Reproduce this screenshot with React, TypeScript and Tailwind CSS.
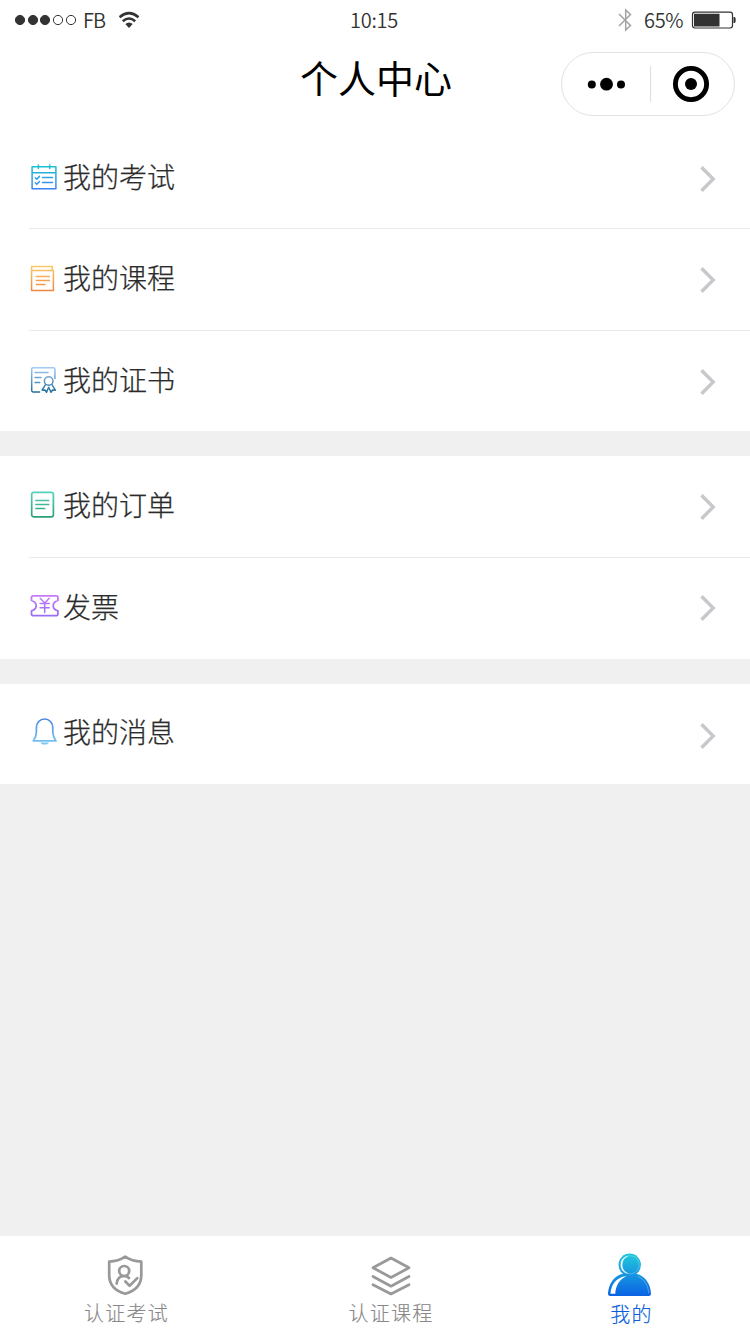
import React from "react";

type IconProps = { id: string };

function Gradient({ id, from, to }: { id: string; from: string; to: string }) {
  return (
    <defs>
      <linearGradient id={id} gradientUnits="userSpaceOnUse" x1="0" y1="4" x2="0" y2="30">
        <stop offset="0" stopColor={from} />
        <stop offset="1" stopColor={to} />
      </linearGradient>
    </defs>
  );
}

function RowIcon({ id, from, to, width = 1.5, children }: IconProps & { from: string; to: string; width?: number; children: React.ReactNode }) {
  return (
    <svg className="h-[34px] w-[34px] shrink-0" viewBox="0 0 34 34" fill="none" stroke={`url(#${id})`} strokeWidth={width} strokeLinecap="round" strokeLinejoin="round">
      <Gradient id={id} from={from} to={to} />
      {children}
    </svg>
  );
}

const examIcon = (
  <RowIcon id="exam" from="#1cc8cf" to="#3f7ff0" width={1.5}>
    <path d="M3.1 6.8h23.8v22H3.1zM3.1 12.7h23.8M9.4 5v3.6M20.7 5v3.6M6.3 17.7l1.5 1.4 2.7-2.7M6.3 22.800l1.500 1.400 2.700-2.700M13.500 17.600h10M13.500 22.600h10" />
  </RowIcon>
);

const courseIcon = (
  <RowIcon id="course" from="#fccb67" to="#f1853f" width={1.5}>
    <path d="M2.6 9.500V5.500h20.700v4M2.600 9.500h21.800v20H2.600zM7.300 15.500h13M7.300 19.500h13M7.300 23.500h8.700" />
  </RowIcon>
);

const certIcon = (
  <RowIcon id="cert" from="#a8ccf7" to="#1c6a99" width={1.5}>
    <path d="M10.6 28.900H4a1.300 1.300 0 0 1-1.300-1.300V6A1.300 1.300 0 0 1 4 4.700h20.600A1.300 1.300 0 0 1 25.900 6v9.500M6 9.500h13M6 14.500h6M6 19.500h4.800" />
    <circle cx="19.7" cy="18" r="4.300" />
    <path d="M16.400 21.600l-3.200 5.600 2.800-.200 1.500 2.300 2.200-5 2.300 5 1.500-2.300 2.800.200-3.300-5.600" />
  </RowIcon>
);

const orderIcon = (
  <RowIcon id="order" from="#55d3bc" to="#299d76" width={1.7}>
    <rect x="2.7" y="4.300" width="21.700" height="24.600" rx="2.200" />
    <path d="M7 12.500h12.600M7 16.500h12.600M7 20.500h8.600" />
  </RowIcon>
);

const invoiceIcon = (
  <RowIcon id="invoice" from="#cc7bff" to="#8f6cf0" width={1.8}>
    <path d="M2.500 7.200A1.300 1.300 0 0 1 3.800 5.900h23.800a1.300 1.300 0 0 1 1.300 1.300v3.300c-2.800.900-4.700 2.800-4.700 5.200s1.900 4.300 4.700 5.200v3.400a1.300 1.300 0 0 1-1.300 1.300H3.800a1.300 1.300 0 0 1-1.300-1.300v-3.400c2.800-.900 4.700-2.800 4.700-5.200s-1.900-4.300-4.700-5.200z" />
    <path strokeWidth="1.500" d="M11.200 8.300l4.500 4.700 4.500-4.700M15.700 13v9.500M11.100 13.500h9.200M11.100 17.800h9.200" />
  </RowIcon>
);

const bellIcon = (
  <RowIcon id="bell" from="#4b86e6" to="#7cc8f2" width={1.700}>
    <path d="M4.200 25.900h22.800c-2-2.700-3.200-5.300-3.200-8.800v-4.300c0-5-3.500-8.800-8.200-8.800S7.400 7.800 7.400 12.800v4.300c0 3.500-1.200 6.100-3.200 8.800z" />
    <path d="M11.300 27.400h8.700c-1 1.500-2.500 2.200-4.300 2.200s-3.400-.700-4.400-2.200z" fill="#7cc8f2" stroke="none" />
  </RowIcon>
);

function Chevron({ className }: { className: string }) {
  return (
    <svg className={`h-[30px] w-5 ${className}`} viewBox="0 0 20 30" fill="none" stroke="#c7c7cc" strokeWidth="3.400">
      <path d="M4.500 3.200L16.200 15 4.500 26.800" />
    </svg>
  );
}

function Row({ icon, label, height, top = "pt-8", shift = "mt-1", divider = false }: { icon: React.ReactNode; label: string; height: string; top?: string; shift?: string; divider?: boolean }) {
  return (
    <div className={`bg-white pl-[29px] ${height}`}>
      <div className={`flex h-full items-start justify-between pr-[33px] ${top} ${divider ? "border-b border-[#ebebeb]" : ""}`}>
        <div className="flex items-start">
          {icon}
          <span className="text-[28px] leading-8 font-light text-[#2b2b2b] [-webkit-text-stroke:0.25px_#2b2b2b]">{label}</span>
        </div>
        <Chevron className={shift} />
      </div>
    </div>
  );
}

function StatusBar() {
  return (
    <div className="grid h-10 grid-cols-3 items-center text-[20px] leading-10 font-[350] text-[#333]">
      <div className="flex items-center pl-[15px]">
        <svg className="h-3 w-[62px]" viewBox="0 0 62 12" fill="#333" stroke="#333">
          <circle cx="5" cy="6" r="4.600" />
          <circle cx="18" cy="6" r="4.600" />
          <circle cx="30" cy="6" r="4.600" />
          <circle cx="43" cy="6" r="4.600" fill="none" />
          <circle cx="56" cy="6" r="4.600" fill="none" />
        </svg>
        <span className="ml-[6px] w-[36px] tracking-[-0.8px]">FB</span>
        <svg className="h-[18px] w-[22px]" viewBox="0 0 22 18" fill="none" stroke="#333" strokeWidth="2.600">
          <path d="M.500 6.200Q10-2 19.500 6.200M3.800 10.200Q10 4.800 16.200 10.200" />
          <path d="M6.300 13Q10 10 13.700 13L10 17z" fill="#333" stroke="none" />
        </svg>
      </div>
      <div className="pr-[2px] text-center tracking-[-0.300px]">10:15</div>
      <div className="flex items-center justify-end pr-[14px]">
        <svg className="h-[26px] w-4" viewBox="0 0 16 26" fill="none" stroke="#a3a3a3" strokeWidth="1.500">
          <path d="M3 7l11.500 11.500L9.700 23V3l4.800 4.500L3 19" />
        </svg>
        <span className="ml-3 w-[47px] tracking-[-0.300px]">65%</span>
        <svg className="h-[18px] w-[45px]" viewBox="0 0 45 18">
          <rect x="1.500" y="1.200" width="40" height="15.800" rx="2.400" fill="none" stroke="#333" strokeWidth="1.200" />
          <path d="M3 2.800h25.500v12.700H3zM42.500 6h1.400q.8.600.8 3t-.8 3h-1.400z" fill="#333" />
        </svg>
      </div>
    </div>
  );
}

function Header() {
  return (
    <div className="grid h-[87px] grid-cols-[1fr_152px_1fr] items-start">
      <span />
      <h1 className="pt-[9px] pl-[1px] text-center text-[38px] leading-[56px] font-normal whitespace-nowrap text-black">个人中心</h1>
      <div className="mt-3 mr-[15px] flex h-16 w-[174px] items-center justify-self-end rounded-full border border-[#e2e2e2]">
        <svg className="h-5 w-[88px]" viewBox="0 0 88 20">
          <circle cx="29.800" cy="10.600" r="4" />
          <circle cx="44.500" cy="10.200" r="6.400" />
          <circle cx="59" cy="10.600" r="4" />
        </svg>
        <span className="h-9 w-px bg-[#dedede]" />
        <svg className="ml-[21px] h-[38px] w-[38px]" viewBox="0 0 38 38">
          <circle cx="19" cy="19" r="15.600" fill="none" stroke="#000" strokeWidth="4.900" />
          <circle cx="19" cy="19" r="6" />
        </svg>
      </div>
    </div>
  );
}

function TabBar() {
  return (
    <div className="grid h-[98px] grid-cols-[252px_278px_200px] bg-white text-[20px] leading-6 font-light tracking-[1.200px] text-[#888] [-webkit-text-stroke:0.15px]">
      <div className="flex flex-col items-center pt-4">
        <svg className="h-12 w-12" viewBox="0 0 48 48" fill="none" stroke="#999" strokeWidth="2.700" strokeLinecap="round" strokeLinejoin="round">
          <path d="M23.200 4.600Q30 9.200 39.300 9.600V23C39.300 32.500 33 39 23.200 41.800 13.300 39 7.200 32.500 7.200 23V9.600Q16.400 9.200 23.200 4.600z" />
          <circle cx="22.200" cy="19" r="5" />
          <path d="M14.700 31.700Q15.500 24 22 24q3.200 0 5 2M23.300 29.500l4.300 4.200 7.700-7.600" />
        </svg>
        <span className="mt-px pl-[1px]">认证考试</span>
      </div>
      <div className="flex flex-col items-center pt-4">
        <svg className="ml-[2px] h-12 w-12" viewBox="0 0 48 48" fill="none" stroke="#999" strokeWidth="2.700" strokeLinejoin="round" strokeLinecap="round">
          <path d="M23 6L41 15.800 23 25.500 5 15.800zM5 24.500L23 34.200 41 24.500M5 32.700L23 42 41 32.700" />
        </svg>
        <span className="mt-px">认证课程</span>
      </div>
      <div className="flex flex-col items-center pt-4">
        <svg className="h-12 w-12" viewBox="0 0 48 48">
          <defs>
            <linearGradient id="profile" gradientUnits="userSpaceOnUse" x1="0" y1="2" x2="0" y2="44">
              <stop offset="0" stopColor="#22c8dc" />
              <stop offset="1" stopColor="#0a62e4" />
            </linearGradient>
          </defs>
          <path d="M14 22.600Q18 21.200 23.500 22.300 29 21.200 33 22.600C40.500 26 44.600 33.500 45 41.500Q45 44 42.500 44H4.500Q2 44 2 41.500C2.600 33.500 6.500 26 14 22.600z" fill="url(#profile)" />
          <path d="M4.500 41.800C5 33 9.500 25.500 20.500 24 13.500 27.500 9.600 33.500 9.300 41.800z" fill="#fff" />
          <path d="M32 24.300C38.500 27.500 42.300 33.500 42.800 41.800" fill="none" stroke="#fff" strokeOpacity=".4" strokeWidth=".7" />
          <circle cx="23.700" cy="12.800" r="11.200" fill="url(#profile)" />
          <path d="M21.500 4.200A8.900 8.900 0 0 0 21.500 21.400A9.500 9.500 0 0 1 21.500 4.200z" fill="#fff" stroke="#fff" strokeWidth=".6" />
          <path d="M21.500 4.200A9 9 0 1 1 21.500 21.400" fill="none" stroke="#fff" strokeOpacity=".35" strokeWidth=".7" />
        </svg>
        <span className="mt-[2px] pl-[3px] text-[#0a5fd8]">我的</span>
      </div>
    </div>
  );
}

export default function App() {
  return (
    <div className="flex h-[1334px] w-[750px] flex-col overflow-hidden bg-[#f0f0f0] font-['Noto_Sans_CJK_SC',sans-serif]">
      <div className="bg-white">
        <StatusBar />
        <Header />
      </div>
      <Row icon={examIcon} label="我的考试" height="h-[102px]" top="pt-[33px]" divider />
      <Row icon={courseIcon} label="我的课程" height="h-[102px]" divider />
      <Row icon={certIcon} label="我的证书" height="h-[100px]" />
      <div className="h-[25px]" />
      <Row icon={orderIcon} label="我的订单" height="h-[102px]" divider />
      <Row icon={invoiceIcon} label="发票" height="h-[101px]" shift="mt-[3px]" />
      <div className="h-[25px]" />
      <Row icon={bellIcon} label="我的消息" height="h-[100px]" top="pt-[31px]" shift="mt-[6px]" />
      <div className="flex-1" />
      <TabBar />
    </div>
  );
}
